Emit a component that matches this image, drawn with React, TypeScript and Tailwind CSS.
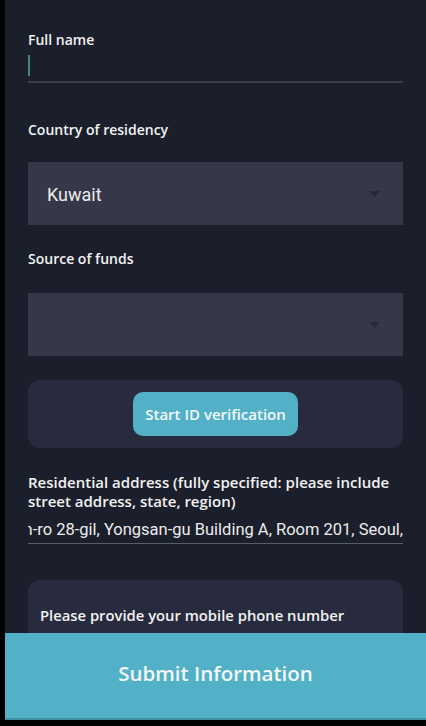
import React from "react";

const font = "[font-family:'Open_Sans',Lato,sans-serif]";
const label = `text-[14px] leading-[20px] font-semibold text-[#f2f2f2] ${font}`;

function Arrow() {
  return (
    <svg width="11" height="6" viewBox="0 0 11 6" className="shrink-0">
      <path d="M0 0 L11 0 L5.5 6 Z" fill="#272a39" />
    </svg>
  );
}

export default function App() {
  return (
    <div className="w-[426px] h-[726px] bg-black flex overflow-hidden">
      <div className="ml-[5px] flex-1 h-[720px] bg-[#1b1f2b] relative overflow-hidden">
        <div className="flex flex-col px-[23px]">
          <div className={`mt-[30px] ${label}`}>Full name</div>
          <div className="h-[31px] pt-[5px]">
            <div className="w-[2px] h-[21px] bg-[#3f8a7e]" />
          </div>
          <div className="h-[2px] bg-[#3b3f4b]" />

          <div className={`mt-[37px] ${label}`}>Country of residency</div>
          <div className="mt-[22px] h-[63px] bg-[#343849] flex items-center pl-[19px] pr-[23px] justify-between">
            <span className="text-[18px] pt-[2px] text-[#ececec] [font-family:Roboto,sans-serif]">Kuwait</span>
            <Arrow />
          </div>

          <div className={`mt-[24px] ${label}`}>Source of funds</div>
          <div className="mt-[24px] h-[63px] bg-[#343849] flex items-center justify-end pr-[23px]">
            <Arrow />
          </div>

          <div className="mt-[24px] h-[68px] rounded-[12px] bg-[#272b3d] flex justify-center pt-[12px]">
            <div className={`w-[165px] h-[44px] rounded-[10px] bg-[#52b1c6] flex items-center justify-center text-[15px] font-semibold text-[#f4f8fa] ${font}`}>
              Start ID verification
            </div>
          </div>

          <div className={`mt-[25px] text-[15px] leading-[19px] font-semibold text-[#f2f2f2] ${font}`}>
            Residential address (fully specified: please include street address, state, region)
          </div>
          <div className="mt-[6px] h-[26px] overflow-hidden flex justify-end items-center">
            <span className="whitespace-nowrap pt-[1px] text-[16.5px] text-[#ececec] [font-family:Roboto,sans-serif]">
              Itaewon-ro 28-gil, Yongsan-gu Building A, Room 201, Seoul,
            </span>
          </div>
          <div className="h-[1px] bg-[#585c68]" />

          <div className="mt-[36px] h-[140px] rounded-[12px] bg-[#272b3d] px-[12px] pt-[25px]">
            <div className={`text-[14.8px] leading-[20px] font-semibold text-[#f2f2f2] ${font}`}>
              Please provide your mobile phone number
            </div>
          </div>
        </div>

        <button className={`absolute left-0 right-0 top-[633px] h-[87px] pb-[5px] bg-[#52b1c6] border-b-[2px] border-[#3f8fa0] flex items-center justify-center text-[20.5px] font-semibold text-[#f4f8fa] ${font}`}>
          Submit Information
        </button>
      </div>
    </div>
  );
}
